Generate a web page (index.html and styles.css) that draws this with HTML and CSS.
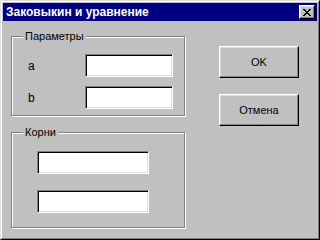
FILE: index.html
```html
<!DOCTYPE html>
<html lang="ru">
<head>
  <meta charset="UTF-8" />
  <title>Заковыкин и уравнение</title>
  <link rel="stylesheet" href="styles.css">
</head>
<body>
  <div class="window">
    <div class="window-inner">
      <div class="titlebar">
        <span class="title">Заковыкин и уравнение</span>
        <button class="close-btn" aria-label="Закрыть">
          <svg width="8" height="7" viewBox="0 0 8 7">
            <path d="M0 0h2v1h1v1h2v-1h1v-1h2v1h-1v1h-1v1h-1v1h1v1h1v1h1v1h-2v-1h-1v-1h-2v1h-1v1h-2v-1h1v-1h1v-1h1v-1h-1v-1h-1v-1h-1z" fill="#000"/>
          </svg>
        </button>
      </div>

      <div class="content">
        <div class="left-col">
          <div class="group group-params">
            <div class="legend">Параметры</div>
            <div class="param-rows">
              <label class="param-label">a</label>
              <input class="field field-param" type="text">
              <label class="param-label">b</label>
              <input class="field field-param" type="text">
            </div>
          </div>

          <div class="group group-roots">
            <div class="legend">Корни</div>
            <div class="root-rows">
              <input class="field field-root" type="text">
              <input class="field field-root" type="text">
            </div>
          </div>
        </div>

        <div class="right-col">
          <button class="btn">OK</button>
          <button class="btn">Отмена</button>
        </div>
      </div>
    </div>
  </div>
</body>
</html>
```

FILE: styles.css
```css
* {
  box-sizing: border-box;
}

body {
  margin: 0;
  padding: 0;
  background: #c0c0c0;
  font-family: 'Liberation Sans', Arial, sans-serif;
  font-size: 11px;
  color: #000;
}

/* Window frame */
.window {
  width: 320px;
  height: 240px;
  border: 1px solid;
  border-color: #dfdfdf #000 #000 #dfdfdf;
  background: #c0c0c0;
}

.window-inner {
  height: 100%;
  border: 1px solid;
  border-color: #fff #808080 #808080 #fff;
  padding: 1px;
}

.titlebar {
  height: 18px;
  background: #000080;
  display: flex;
  align-items: center;
  justify-content: space-between;
  padding: 0 2px 0 3px;
}

.title {
  color: #fff;
  font-weight: bold;
  font-size: 12px;
}

.close-btn {
  width: 16px;
  height: 14px;
  padding: 0;
  background: #c0c0c0;
  border: 1px solid;
  border-color: #fff #000 #000 #fff;
  box-shadow: inset -1px -1px 0 #808080, inset 1px 1px 0 #dfdfdf;
  display: flex;
  align-items: center;
  justify-content: center;
}

/* Dialog body */
.content {
  display: flex;
  padding: 15px 0 0 8px;
}

.left-col {
  display: flex;
  flex-direction: column;
  gap: 16px;
}

.group {
  width: 174px;
  border: 1px solid #808080;
  box-shadow: 1px 1px 0 #fff, inset 1px 1px 0 #fff;
}

.group-params {
  height: 80px;
}

.group-roots {
  height: 96px;
}

.legend {
  width: fit-content;
  margin: -7px 0 0 11px;
  padding: 0 2px;
  line-height: 13px;
  background: #c0c0c0;
}

.param-rows {
  display: grid;
  grid-template-columns: 57px 88px;
  row-gap: 9px;
  align-items: center;
  padding: 11px 0 0 16px;
}

.param-label {
  font-size: 12px;
}

.root-rows {
  display: flex;
  flex-direction: column;
  gap: 16px;
  padding: 12px 0 0 25px;
}

.field {
  height: 23px;
  padding: 0 3px;
  background: #fff;
  border: 1px solid;
  border-color: #808080 #fff #fff #808080;
  box-shadow: inset 1px 1px 0 #000, inset -1px -1px 0 #dfdfdf;
  font: inherit;
  outline: none;
}

.field-param {
  width: 88px;
}

.field-root {
  width: 112px;
}

.right-col {
  display: flex;
  flex-direction: column;
  gap: 16px;
  margin: 10px 0 0 34px;
}

.btn {
  width: 80px;
  height: 32px;
  padding: 0;
  background: #c0c0c0;
  border: 1px solid;
  border-color: #fff #000 #000 #fff;
  box-shadow: inset -1px -1px 0 #808080, inset 1px 1px 0 #dfdfdf;
  font: inherit;
  color: #000;
}
```
